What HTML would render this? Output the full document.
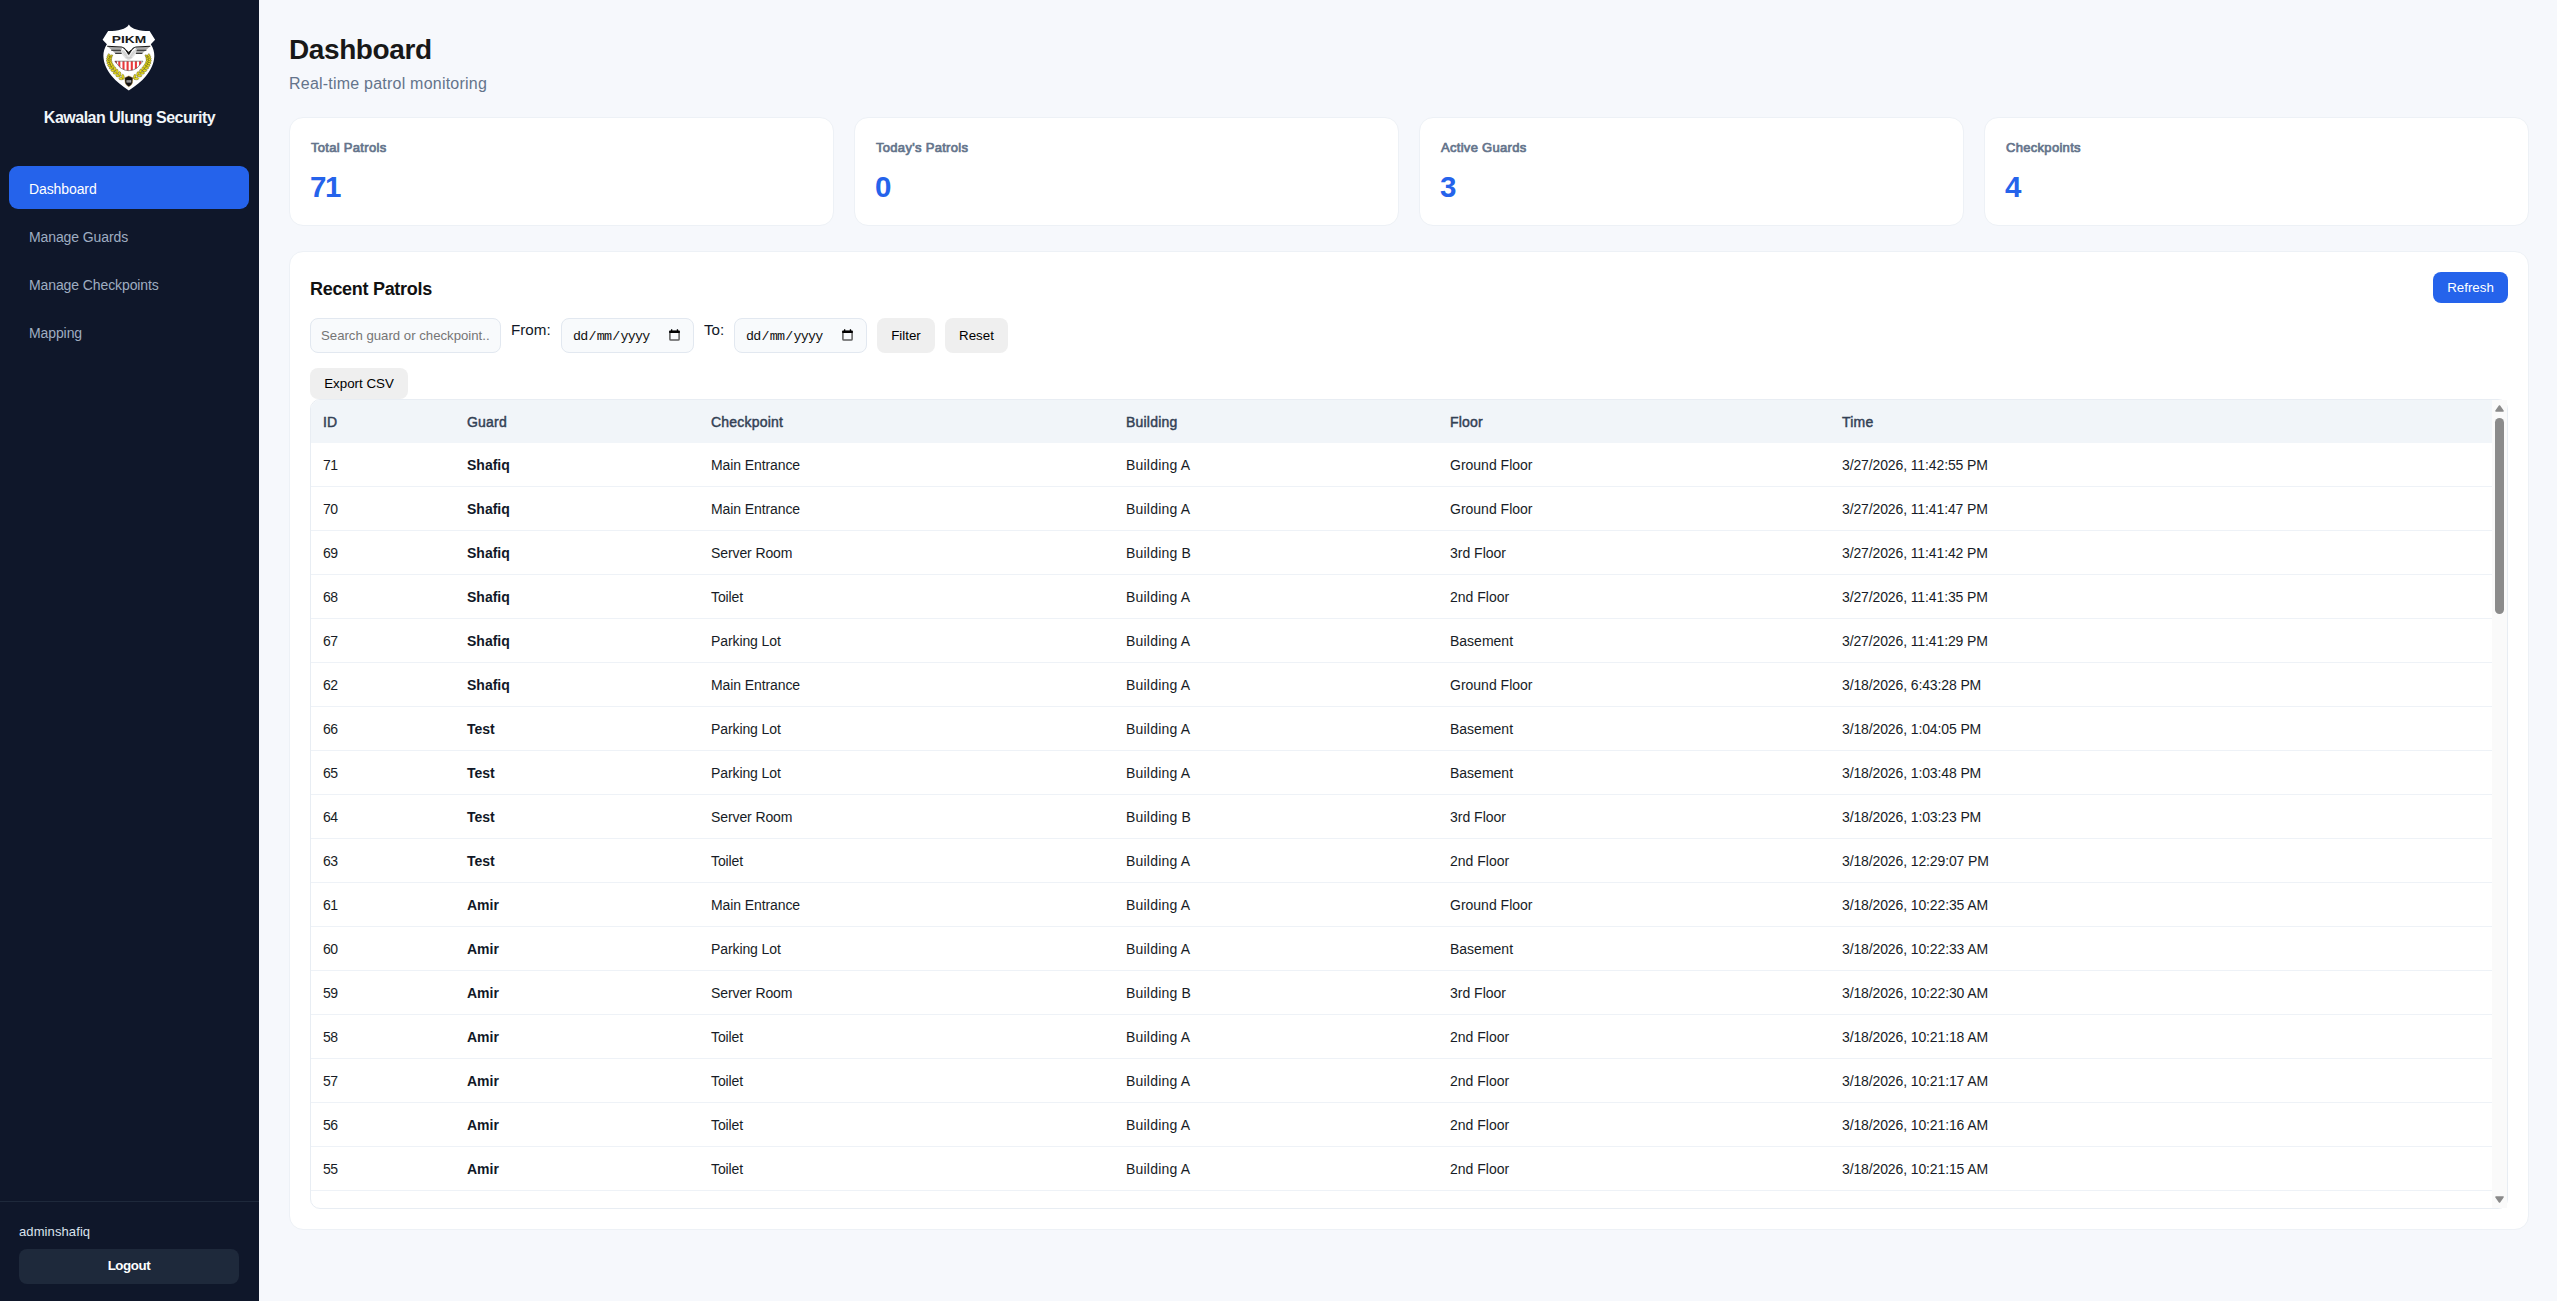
<!DOCTYPE html>
<html lang="en">
<head>
<meta charset="utf-8">
<title>Dashboard - Kawalan Ulung Security</title>
<style>
*{box-sizing:border-box;margin:0;padding:0}
html,body{width:2557px;height:1301px;overflow:hidden}
body{background:#f6f8fc;font-family:"Liberation Sans",sans-serif;color:#0f172a;position:relative}
.abs{position:absolute;white-space:nowrap}
button{border:0;padding:0;margin:0;font-family:"Liberation Sans",sans-serif;display:block;cursor:pointer;appearance:none;-webkit-appearance:none}
a{text-decoration:none;display:block}
h1,h2,p{margin:0;font-weight:400}

/* ---------- sidebar ---------- */
#sidebar{position:absolute;left:0;top:0;width:259px;height:1301px;background:#0f172a}
#logo{position:absolute;left:102px;top:24px;width:54px;height:67px}
#brand{position:absolute;left:0;width:259px;top:108px;text-align:center;font-weight:700;font-size:16px;line-height:20px;color:#f1f5f9;letter-spacing:-0.5px}
.nav{position:absolute;left:9px;width:240px;height:43px;border-radius:9px;padding-left:20px;font-size:14px;line-height:47px;color:#9fadc1;letter-spacing:-0.1px;overflow:hidden}
.nav.active{background:#2563eb;color:#fff}
#sidefoot{position:absolute;left:0;top:1201px;width:259px;height:100px;border-top:1px solid #1e293b}
#user{position:absolute;left:19px;top:22px;font-size:13px;line-height:16px;color:#dbe3ee;letter-spacing:0.1px}
#logout{position:absolute;left:19px;top:47px;width:220px;height:35px;border-radius:8px;background:#1e293b;color:#fff;font-weight:700;font-size:13.33px;line-height:32px;padding-bottom:2px;text-align:center;letter-spacing:-0.4px}

/* ---------- main ---------- */
#h1{left:289px;top:31px;font-size:28px;line-height:38px;font-weight:700;color:#181818;letter-spacing:-0.4px}
#sub{left:289px;top:74px;font-size:16px;line-height:20px;color:#64748b;letter-spacing:0.22px}
.card{position:absolute;top:117px;width:545px;height:109px;background:#fff;border:1px solid #edf1f6;border-radius:14px}
.card .lbl{position:absolute;left:21px;top:22px;font-size:13px;line-height:16px;font-weight:400;-webkit-text-stroke:0.7px #64748b;color:#64748b;letter-spacing:0.3px;white-space:nowrap}
.card .num{position:absolute;left:20px;top:50.5px;font-size:29.5px;line-height:36px;font-weight:700;color:#2563eb;white-space:nowrap;letter-spacing:-1.5px}

#panel{position:absolute;left:289px;top:251px;width:2240px;height:979px;background:#fff;border:1px solid #edf1f6;border-radius:14px}

/* ---------- panel content ---------- */
#ptitle{left:310px;top:277px;font-size:18px;line-height:24px;font-weight:700;color:#111;letter-spacing:-0.3px}
#refresh{position:absolute;left:2433px;top:272px;width:75px;height:31px;border-radius:8px;background:#2563eb;color:#fff;font-size:13.33px;line-height:31px;text-align:center}
.inp{position:absolute;top:318px;height:35px;border:1px solid #e2e8f0;background:#f8fafc;border-radius:8px;white-space:nowrap;overflow:hidden}
#search{left:310px;width:191px;padding-left:10px;font-size:13.2px;line-height:33px;color:#757575}
#search span{display:block;width:169px;overflow:hidden;white-space:nowrap}
.flabel{top:318px;font-size:15.2px;line-height:24px;color:#111827}
.date{width:133px;font-family:"Liberation Mono","DejaVu Sans Mono",monospace;font-size:13.33px;letter-spacing:-0.75px;line-height:36px;color:#111;padding-left:10px}
.date i{font-style:normal;padding:0 1px}
.date svg{position:absolute;left:107px;top:10px}
.gbtn{position:absolute;background:#efefef;border-radius:8px;color:#000;font-size:13.33px;text-align:center;white-space:nowrap}

/* ---------- table ---------- */
#twrap{position:absolute;left:310px;top:399px;width:2198px;height:810px;border:1px solid #e8edf3;border-radius:10px;overflow:hidden;background:#fff}
#tbl{position:absolute;left:0;top:0;width:2181px;border-collapse:separate;border-spacing:0;table-layout:fixed}
#tbl th{height:43px;background:#f1f5f9;text-align:left;font-weight:400;-webkit-text-stroke:0.45px #334155;font-size:14px;color:#334155;padding:1px 0 0 12px;letter-spacing:0.2px;white-space:nowrap}
#tbl td{height:44px;border-bottom:1px solid #eef2f7;font-size:14px;color:#171c26;padding:1px 0 0 12px;white-space:nowrap}
#tbl td.g{font-weight:700;color:#111827}
#tbl td.c0{letter-spacing:-0.5px}
#tbl td.c2{letter-spacing:-0.1px}
#tbl td.c3{letter-spacing:0.2px}
#tbl td.c5{letter-spacing:-0.12px}
#sbar{position:absolute;left:2492px;top:400px;width:15px;height:808px;background:#fafafa}
#sbar .thumb{position:absolute;left:3px;top:18px;width:9px;height:196px;border-radius:4.5px;background:#8b8b8b}
#sbar svg{position:absolute;left:2px}
</style>
</head>
<body>

<aside id="sidebar">
  <svg id="logo" viewBox="102 24 54 67" width="54" height="67">
<path d="M128.9,24.6 C126.3,29.5 117,31.2 108.1,31.1 L102.6,39.7 L106.9,44.3 C104.5,48 103.3,52 103.4,56 C103.6,63 106.5,69.5 111.9,76.2 C116,81 122,86 128.8,90.4 C135.7,86 141.7,81 145.8,76.2 C151.2,69.5 154.1,63 154.3,56 C154.4,52 153.2,48 150.8,44.3 L155.1,39.7 L149.6,31.1 C140.7,31.2 131.4,29.5 128.9,24.6 Z" fill="#fff"/>
<text text-rendering="geometricPrecision" x="111.8" y="42.9" textLength="34.4" lengthAdjust="spacingAndGlyphs" font-family="Liberation Sans, sans-serif" font-weight="700" font-size="10.2" fill="#1c1a1a">PIKM</text>
<path d="M107.6,46.6 L121.6,47.4 L123,54 L116,54 Z" fill="#a9a9a9"/>
<path d="M150.0,46.6 L136.0,47.4 L134.6,54 L141.6,54 Z" fill="#a9a9a9"/>
<path d="M120.2,48.4 L128.7,54.2 L137.3,48.4 L135.4,54.6 L132,58.6 L128.7,59.8 L125.4,58.6 L122,54.6 Z" fill="#e4e4e4"/><path d="M121.5,50 L126,56.5 M123.5,50.2 L127.5,57.5 M136,50 L131.4,56.5 M134,50.2 L130,57.5 M125.5,57.6 H132 M126.8,58.9 H130.6" stroke="#b9b9b9" stroke-width="0.5" fill="none"/>
<path d="M107.2,46.2 L121.4,47.0 C125,47.3 126.6,51.6 128.7,54 C130.8,51.6 132.4,47.3 136,47.0 L150.3,46.2" fill="none" stroke="#141414" stroke-width="1.15"/>
<path d="M126.2,50.2 L128.7,54.2 L131.2,50.2 L128.7,52.2 Z" fill="#141414" stroke="#141414" stroke-width="0.8"/>
<path d="M111.2,50.3 H121 M115.2,53.4 H121.6 M136.6,50.3 H146.4 M136,53.4 H142.4" stroke="#1d1d1d" stroke-width="0.9"/>
<clipPath id="shc"><path d="M114.8,61.2 L143,61.2 L137,68.1 Q133,70.7 128.8,70.7 Q124.6,70.7 120.6,68.1 Z"/></clipPath>
<g clip-path="url(#shc)"><rect x="114" y="61" width="30" height="10" fill="#fff"/>
<path d="M115.8,61 V71 M119.3,61 V71 M123.5,61 V71 M127.6,61 V71 M131.8,61 V71 M135.9,61 V71 M140.1,61 V71" stroke="#e8383c" stroke-width="2.1"/>
<path d="M115.6,61 V71" stroke="#8d1c22" stroke-width="1.5"/></g>
<path d="M114.8,61.2 L143,61.2 L137,68.1 Q133,70.7 128.8,70.7 Q124.6,70.7 120.6,68.1 Z" fill="none" stroke="#3f3f3f" stroke-width="0.55"/>
<g fill="#ebde1e" stroke="#45420e" stroke-width="0.38"><ellipse cx="109.17" cy="55.47" rx="1.89" ry="0.95" transform="rotate(250 109.17 55.47)"/><ellipse cx="111.02" cy="56.13" rx="1.89" ry="0.95" transform="rotate(330 111.02 56.13)"/><ellipse cx="108.42" cy="57.35" rx="1.94" ry="0.97" transform="rotate(238 108.42 57.35)"/><ellipse cx="110.43" cy="57.63" rx="1.94" ry="0.97" transform="rotate(318 110.43 57.63)"/><ellipse cx="108.08" cy="59.34" rx="2.00" ry="1.00" transform="rotate(226 108.08 59.34)"/><ellipse cx="110.15" cy="59.19" rx="2.00" ry="1.00" transform="rotate(306 110.15 59.19)"/><ellipse cx="108.17" cy="61.44" rx="2.05" ry="1.02" transform="rotate(214 108.17 61.44)"/><ellipse cx="110.22" cy="60.87" rx="2.05" ry="1.02" transform="rotate(294 110.22 60.87)"/><ellipse cx="108.73" cy="63.61" rx="2.10" ry="1.05" transform="rotate(205 108.73 63.61)"/><ellipse cx="110.71" cy="62.68" rx="2.10" ry="1.05" transform="rotate(285 110.71 62.68)"/><ellipse cx="109.74" cy="65.84" rx="2.15" ry="1.08" transform="rotate(197 109.74 65.84)"/><ellipse cx="111.63" cy="64.63" rx="2.15" ry="1.08" transform="rotate(277 111.63 64.63)"/><ellipse cx="111.19" cy="68.15" rx="2.21" ry="1.10" transform="rotate(192 111.19 68.15)"/><ellipse cx="112.99" cy="66.73" rx="2.21" ry="1.10" transform="rotate(272 112.99 66.73)"/><ellipse cx="113.08" cy="70.56" rx="2.26" ry="1.13" transform="rotate(187 113.08 70.56)"/><ellipse cx="114.81" cy="68.97" rx="2.26" ry="1.13" transform="rotate(267 114.81 68.97)"/><ellipse cx="115.40" cy="73.09" rx="2.31" ry="1.16" transform="rotate(184 115.40 73.09)"/><ellipse cx="117.08" cy="71.36" rx="2.31" ry="1.16" transform="rotate(264 117.08 71.36)"/><ellipse cx="118.16" cy="75.76" rx="2.36" ry="1.18" transform="rotate(182 118.16 75.76)"/><ellipse cx="119.79" cy="73.93" rx="2.36" ry="1.18" transform="rotate(262 119.79 73.93)"/><ellipse cx="121.35" cy="78.60" rx="2.42" ry="1.21" transform="rotate(180 121.35 78.60)"/><ellipse cx="122.96" cy="76.68" rx="2.42" ry="1.21" transform="rotate(260 122.96 76.68)"/><ellipse cx="146.68" cy="56.13" rx="1.89" ry="0.95" transform="rotate(210 146.68 56.13)"/><ellipse cx="148.53" cy="55.47" rx="1.89" ry="0.95" transform="rotate(290 148.53 55.47)"/><ellipse cx="147.27" cy="57.63" rx="1.94" ry="0.97" transform="rotate(222 147.27 57.63)"/><ellipse cx="149.28" cy="57.35" rx="1.94" ry="0.97" transform="rotate(302 149.28 57.35)"/><ellipse cx="147.55" cy="59.19" rx="2.00" ry="1.00" transform="rotate(234 147.55 59.19)"/><ellipse cx="149.62" cy="59.34" rx="2.00" ry="1.00" transform="rotate(314 149.62 59.34)"/><ellipse cx="147.48" cy="60.87" rx="2.05" ry="1.02" transform="rotate(246 147.48 60.87)"/><ellipse cx="149.53" cy="61.44" rx="2.05" ry="1.02" transform="rotate(326 149.53 61.44)"/><ellipse cx="146.99" cy="62.68" rx="2.10" ry="1.05" transform="rotate(255 146.99 62.68)"/><ellipse cx="148.97" cy="63.61" rx="2.10" ry="1.05" transform="rotate(335 148.97 63.61)"/><ellipse cx="146.07" cy="64.63" rx="2.15" ry="1.08" transform="rotate(263 146.07 64.63)"/><ellipse cx="147.96" cy="65.84" rx="2.15" ry="1.08" transform="rotate(343 147.96 65.84)"/><ellipse cx="144.71" cy="66.73" rx="2.21" ry="1.10" transform="rotate(268 144.71 66.73)"/><ellipse cx="146.51" cy="68.15" rx="2.21" ry="1.10" transform="rotate(348 146.51 68.15)"/><ellipse cx="142.89" cy="68.97" rx="2.26" ry="1.13" transform="rotate(273 142.89 68.97)"/><ellipse cx="144.62" cy="70.56" rx="2.26" ry="1.13" transform="rotate(353 144.62 70.56)"/><ellipse cx="140.62" cy="71.36" rx="2.31" ry="1.16" transform="rotate(276 140.62 71.36)"/><ellipse cx="142.30" cy="73.09" rx="2.31" ry="1.16" transform="rotate(356 142.30 73.09)"/><ellipse cx="137.91" cy="73.93" rx="2.36" ry="1.18" transform="rotate(278 137.91 73.93)"/><ellipse cx="139.54" cy="75.76" rx="2.36" ry="1.18" transform="rotate(358 139.54 75.76)"/><ellipse cx="134.74" cy="76.68" rx="2.42" ry="1.21" transform="rotate(280 134.74 76.68)"/><ellipse cx="136.35" cy="78.60" rx="2.42" ry="1.21" transform="rotate(360 136.35 78.60)"/></g>
<path d="M128.8,75.9 L132.9,77.8 L132.4,82.9 Q131.6,85.2 128.8,86.8 Q126,85.2 125.2,82.9 L124.7,77.8 Z" fill="#151313" stroke="#b8902a" stroke-width="0.45"/>
<rect x="126.6" y="80.2" width="4.6" height="2.3" fill="#d8d8d8"/><path d="M127.7,80.2 V82.5 M128.9,80.2 V82.5 M130.1,80.2 V82.5" stroke="#222" stroke-width="0.5"/>
</svg>
  <div id="brand">Kawalan Ulung Security</div>
  <a class="nav active" style="top:166px">Dashboard</a>
  <a class="nav" style="top:214px">Manage Guards</a>
  <a class="nav" style="top:262px">Manage Checkpoints</a>
  <a class="nav" style="top:310px">Mapping</a>
  <div id="sidefoot">
    <div id="user">adminshafiq</div>
    <button id="logout">Logout</button>
  </div>
</aside>

<h1 class="abs" id="h1">Dashboard</h1>
<p class="abs" id="sub">Real-time patrol monitoring</p>

<div class="card" style="left:289px"><div class="lbl">Total Patrols</div><div class="num">71</div></div>
<div class="card" style="left:854px"><div class="lbl">Today's Patrols</div><div class="num">0</div></div>
<div class="card" style="left:1419px"><div class="lbl">Active Guards</div><div class="num">3</div></div>
<div class="card" style="left:1984px"><div class="lbl">Checkpoints</div><div class="num">4</div></div>

<div id="panel">
</div>


<h2 class="abs" id="ptitle">Recent Patrols</h2>
<button id="refresh">Refresh</button>
<div class="inp" id="search"><span>Search guard or checkpoint...</span></div>
<label class="abs flabel" style="left:511px">From:</label>
<div class="inp date" style="left:561px"><i>dd</i>/<i>mm</i>/<i>yyyy</i><svg width="11" height="12" viewBox="0 0 11 12"><rect x="0.9" y="2.6" width="9.2" height="8.5" rx="0.9" fill="none" stroke="#5c5c5c" stroke-width="1.5"/><rect x="0.2" y="1.6" width="10.6" height="2.4" rx="0.6" fill="#000"/><path d="M2 0.2h1.3v2H2zM7.8 0.2h1.3v2H7.8z" fill="#000"/></svg></div>
<label class="abs flabel" style="left:704px">To:</label>
<div class="inp date" style="left:734px"><i>dd</i>/<i>mm</i>/<i>yyyy</i><svg width="11" height="12" viewBox="0 0 11 12"><rect x="0.9" y="2.6" width="9.2" height="8.5" rx="0.9" fill="none" stroke="#5c5c5c" stroke-width="1.5"/><rect x="0.2" y="1.6" width="10.6" height="2.4" rx="0.6" fill="#000"/><path d="M2 0.2h1.3v2H2zM7.8 0.2h1.3v2H7.8z" fill="#000"/></svg></div>
<button class="gbtn" style="left:877px;top:318px;width:58px;height:35px;line-height:35px">Filter</button>
<button class="gbtn" style="left:945px;top:318px;width:63px;height:35px;line-height:35px">Reset</button>
<button class="gbtn" style="left:310px;top:368px;width:98px;height:31px;line-height:31px">Export CSV</button>
<div id="twrap">
<table id="tbl">
<colgroup><col style="width:144px"><col style="width:244px"><col style="width:415px"><col style="width:324px"><col style="width:392px"><col style="width:662px"></colgroup>
<thead><tr><th>ID</th><th>Guard</th><th>Checkpoint</th><th>Building</th><th>Floor</th><th>Time</th></tr></thead>
<tbody>
<tr><td class="c0">71</td><td class="g">Shafiq</td><td class="c2">Main Entrance</td><td class="c3">Building A</td><td class="c4">Ground Floor</td><td class="c5">3/27/2026, 11:42:55 PM</td></tr>
<tr><td class="c0">70</td><td class="g">Shafiq</td><td class="c2">Main Entrance</td><td class="c3">Building A</td><td class="c4">Ground Floor</td><td class="c5">3/27/2026, 11:41:47 PM</td></tr>
<tr><td class="c0">69</td><td class="g">Shafiq</td><td class="c2">Server Room</td><td class="c3">Building B</td><td class="c4">3rd Floor</td><td class="c5">3/27/2026, 11:41:42 PM</td></tr>
<tr><td class="c0">68</td><td class="g">Shafiq</td><td class="c2">Toilet</td><td class="c3">Building A</td><td class="c4">2nd Floor</td><td class="c5">3/27/2026, 11:41:35 PM</td></tr>
<tr><td class="c0">67</td><td class="g">Shafiq</td><td class="c2">Parking Lot</td><td class="c3">Building A</td><td class="c4">Basement</td><td class="c5">3/27/2026, 11:41:29 PM</td></tr>
<tr><td class="c0">62</td><td class="g">Shafiq</td><td class="c2">Main Entrance</td><td class="c3">Building A</td><td class="c4">Ground Floor</td><td class="c5">3/18/2026, 6:43:28 PM</td></tr>
<tr><td class="c0">66</td><td class="g">Test</td><td class="c2">Parking Lot</td><td class="c3">Building A</td><td class="c4">Basement</td><td class="c5">3/18/2026, 1:04:05 PM</td></tr>
<tr><td class="c0">65</td><td class="g">Test</td><td class="c2">Parking Lot</td><td class="c3">Building A</td><td class="c4">Basement</td><td class="c5">3/18/2026, 1:03:48 PM</td></tr>
<tr><td class="c0">64</td><td class="g">Test</td><td class="c2">Server Room</td><td class="c3">Building B</td><td class="c4">3rd Floor</td><td class="c5">3/18/2026, 1:03:23 PM</td></tr>
<tr><td class="c0">63</td><td class="g">Test</td><td class="c2">Toilet</td><td class="c3">Building A</td><td class="c4">2nd Floor</td><td class="c5">3/18/2026, 12:29:07 PM</td></tr>
<tr><td class="c0">61</td><td class="g">Amir</td><td class="c2">Main Entrance</td><td class="c3">Building A</td><td class="c4">Ground Floor</td><td class="c5">3/18/2026, 10:22:35 AM</td></tr>
<tr><td class="c0">60</td><td class="g">Amir</td><td class="c2">Parking Lot</td><td class="c3">Building A</td><td class="c4">Basement</td><td class="c5">3/18/2026, 10:22:33 AM</td></tr>
<tr><td class="c0">59</td><td class="g">Amir</td><td class="c2">Server Room</td><td class="c3">Building B</td><td class="c4">3rd Floor</td><td class="c5">3/18/2026, 10:22:30 AM</td></tr>
<tr><td class="c0">58</td><td class="g">Amir</td><td class="c2">Toilet</td><td class="c3">Building A</td><td class="c4">2nd Floor</td><td class="c5">3/18/2026, 10:21:18 AM</td></tr>
<tr><td class="c0">57</td><td class="g">Amir</td><td class="c2">Toilet</td><td class="c3">Building A</td><td class="c4">2nd Floor</td><td class="c5">3/18/2026, 10:21:17 AM</td></tr>
<tr><td class="c0">56</td><td class="g">Amir</td><td class="c2">Toilet</td><td class="c3">Building A</td><td class="c4">2nd Floor</td><td class="c5">3/18/2026, 10:21:16 AM</td></tr>
<tr><td class="c0">55</td><td class="g">Amir</td><td class="c2">Toilet</td><td class="c3">Building A</td><td class="c4">2nd Floor</td><td class="c5">3/18/2026, 10:21:15 AM</td></tr>
<tr><td></td><td></td><td></td><td></td><td></td><td></td></tr>
</tbody>
</table>
</div>
<div id="sbar"><svg style="top:4px" width="11" height="9" viewBox="0 0 11 9"><path d="M5.5 2 L9 7 L2 7 Z" fill="#8b8b8b" stroke="#8b8b8b" stroke-width="1.6" stroke-linejoin="round"/></svg><div class="thumb"></div><svg style="top:795px" width="11" height="9" viewBox="0 0 11 9"><path d="M5.5 7 L9 2 L2 2 Z" fill="#8b8b8b" stroke="#8b8b8b" stroke-width="1.6" stroke-linejoin="round"/></svg></div>

</body>
</html>
